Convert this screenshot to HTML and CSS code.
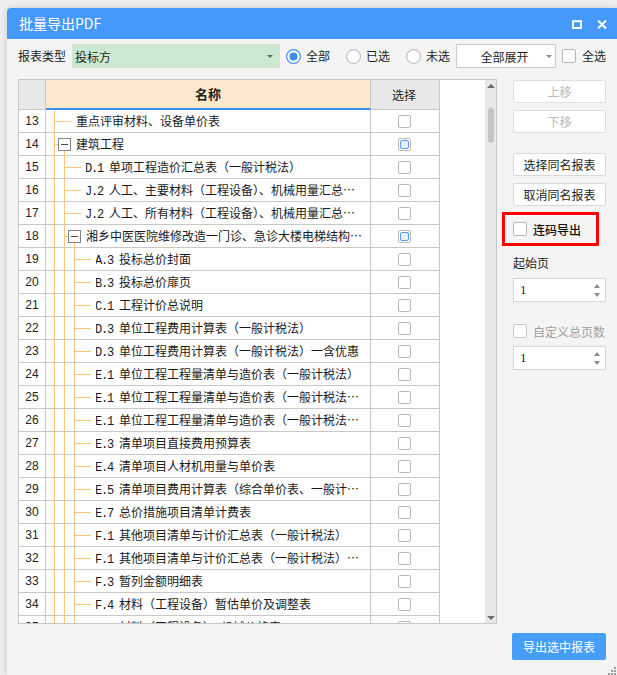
FILE: index.html
```html
<!DOCTYPE html>
<html lang="zh-CN">
<head>
<meta charset="utf-8">
<title>批量导出PDF</title>
<link rel="stylesheet" href="styles.css">
</head>
<body>
<div class="window">
  <div class="titlebar">
    <div class="title">批量导出PDF</div>
    <svg class="tb-icon" width="10" height="9" viewBox="0 0 10 9"><rect x="1" y="1.2" width="8" height="6.8" fill="none" stroke="#fff" stroke-width="2"/></svg>
    <svg class="tb-icon close" width="10" height="9" viewBox="0 0 10 9"><path d="M1 0.5 L9 8.5 M9 0.5 L1 8.5" stroke="#fff" stroke-width="2" fill="none"/></svg>
  </div>

  <div class="toolbar">
    <span class="lbl w48">报表类型</span>
    <div class="combo green"><span class="combo-text">投标方</span><span class="caret"></span></div>
    <svg class="radio" width="15" height="15" viewBox="0 0 15 15"><circle cx="7.5" cy="7.5" r="6.9" fill="#fff" stroke="#3d8ef0" stroke-width="1.2"/><circle cx="7.5" cy="7.5" r="4" fill="#3d8ef0"/></svg>
    <span class="lbl rl">全部</span>
    <svg class="radio gap" width="15" height="15" viewBox="0 0 15 15"><circle cx="7.5" cy="7.5" r="6.9" fill="#fff" stroke="#c2c2c2" stroke-width="1.2"/></svg>
    <span class="lbl rl">已选</span>
    <svg class="radio gap" width="15" height="15" viewBox="0 0 15 15"><circle cx="7.5" cy="7.5" r="6.9" fill="#fff" stroke="#c2c2c2" stroke-width="1.2"/></svg>
    <span class="lbl rl">未选</span>
    <div class="combo white"><span class="combo-text c">全部展开</span><span class="caret"></span></div>
    <span class="check tcheck"></span>
    <span class="lbl rl6">全选</span>
  </div>

  <div class="main">
    <div class="table">
      <div class="grid">
        <div class="hrow">
          <div class="hnum"></div>
          <div class="hname">名称</div>
          <div class="hsel">选择</div>
        </div>

        <div class="row"><div class="num">13</div><div class="name"><span class="br"></span><span class="txt">重点评审材料、设备单价表</span></div><div class="sel"><span class="cb"></span></div></div>
        <div class="row"><div class="num">14</div><div class="name"><span class="br exp"><span class="box"></span></span><span class="txt">建筑工程</span></div><div class="sel"><span class="cb on"><span class="inner"></span></span></div></div>
        <div class="row"><div class="num">15</div><div class="name"><span class="g"></span><span class="br"></span><span class="txt"><span class="code">D.1</span>单项工程造价汇总表（一般计税法）</span></div><div class="sel"><span class="cb"></span></div></div>
        <div class="row"><div class="num">16</div><div class="name"><span class="g"></span><span class="br"></span><span class="txt"><span class="code">J.2</span>人工、主要材料（工程设备）、机械用量汇总表（一般计税法）</span></div><div class="sel"><span class="cb"></span></div></div>
        <div class="row"><div class="num">17</div><div class="name"><span class="g"></span><span class="br"></span><span class="txt"><span class="code">J.2</span>人工、所有材料（工程设备）、机械用量汇总表（一般计税法）</span></div><div class="sel"><span class="cb"></span></div></div>
        <div class="row"><div class="num">18</div><div class="name"><span class="g"></span><span class="br exp"><span class="box"></span></span><span class="txt">湘乡中医医院维修改造一门诊、急诊大楼电梯结构加固工程</span></div><div class="sel"><span class="cb on"><span class="inner"></span></span></div></div>
        <div class="row"><div class="num">19</div><div class="name"><span class="g"></span><span class="g"></span><span class="br"></span><span class="txt"><span class="code">A.3</span>投标总价封面</span></div><div class="sel"><span class="cb"></span></div></div>
        <div class="row"><div class="num">20</div><div class="name"><span class="g"></span><span class="g"></span><span class="br"></span><span class="txt"><span class="code">B.3</span>投标总价扉页</span></div><div class="sel"><span class="cb"></span></div></div>
        <div class="row"><div class="num">21</div><div class="name"><span class="g"></span><span class="g"></span><span class="br"></span><span class="txt"><span class="code">C.1</span>工程计价总说明</span></div><div class="sel"><span class="cb"></span></div></div>
        <div class="row"><div class="num">22</div><div class="name"><span class="g"></span><span class="g"></span><span class="br"></span><span class="txt"><span class="code">D.3</span>单位工程费用计算表（一般计税法）</span></div><div class="sel"><span class="cb"></span></div></div>
        <div class="row"><div class="num">23</div><div class="name"><span class="g"></span><span class="g"></span><span class="br"></span><span class="txt"><span class="code">D.3</span>单位工程费用计算表（一般计税法）一含优惠</span></div><div class="sel"><span class="cb"></span></div></div>
        <div class="row"><div class="num">24</div><div class="name"><span class="g"></span><span class="g"></span><span class="br"></span><span class="txt"><span class="code">E.1</span>单位工程工程量清单与造价表（一般计税法）</span></div><div class="sel"><span class="cb"></span></div></div>
        <div class="row"><div class="num">25</div><div class="name"><span class="g"></span><span class="g"></span><span class="br"></span><span class="txt"><span class="code">E.1</span>单位工程工程量清单与造价表（一般计税法）一含优惠</span></div><div class="sel"><span class="cb"></span></div></div>
        <div class="row"><div class="num">26</div><div class="name"><span class="g"></span><span class="g"></span><span class="br"></span><span class="txt"><span class="code">E.1</span>单位工程工程量清单与造价表（一般计税法）一含优惠二</span></div><div class="sel"><span class="cb"></span></div></div>
        <div class="row"><div class="num">27</div><div class="name"><span class="g"></span><span class="g"></span><span class="br"></span><span class="txt"><span class="code">E.3</span>清单项目直接费用预算表</span></div><div class="sel"><span class="cb"></span></div></div>
        <div class="row"><div class="num">28</div><div class="name"><span class="g"></span><span class="g"></span><span class="br"></span><span class="txt"><span class="code">E.4</span>清单项目人材机用量与单价表</span></div><div class="sel"><span class="cb"></span></div></div>
        <div class="row"><div class="num">29</div><div class="name"><span class="g"></span><span class="g"></span><span class="br"></span><span class="txt"><span class="code">E.5</span>清单项目费用计算表（综合单价表、一般计税法）</span></div><div class="sel"><span class="cb"></span></div></div>
        <div class="row"><div class="num">30</div><div class="name"><span class="g"></span><span class="g"></span><span class="br"></span><span class="txt"><span class="code">E.7</span>总价措施项目清单计费表</span></div><div class="sel"><span class="cb"></span></div></div>
        <div class="row"><div class="num">31</div><div class="name"><span class="g"></span><span class="g"></span><span class="br"></span><span class="txt"><span class="code">F.1</span>其他项目清单与计价汇总表（一般计税法）</span></div><div class="sel"><span class="cb"></span></div></div>
        <div class="row"><div class="num">32</div><div class="name"><span class="g"></span><span class="g"></span><span class="br"></span><span class="txt"><span class="code">F.1</span>其他项目清单与计价汇总表（一般计税法）一含优惠</span></div><div class="sel"><span class="cb"></span></div></div>
        <div class="row"><div class="num">33</div><div class="name"><span class="g"></span><span class="g"></span><span class="br"></span><span class="txt"><span class="code">F.3</span>暂列金额明细表</span></div><div class="sel"><span class="cb"></span></div></div>
        <div class="row"><div class="num">34</div><div class="name"><span class="g"></span><span class="g"></span><span class="br"></span><span class="txt"><span class="code">F.4</span>材料（工程设备）暂估单价及调整表</span></div><div class="sel"><span class="cb"></span></div></div>
        <div class="row"><div class="num">35</div><div class="name"><span class="g"></span><span class="g"></span><span class="br"></span><span class="txt"><span class="code">F.5</span>材料（工程设备）、机械价格表</span></div><div class="sel"><span class="cb"></span></div></div>
      </div>
      <div class="vscroll">
        <span class="arr up"></span>
        <span class="thumb"></span>
        <span class="spacer"></span>
        <span class="arr down"></span>
      </div>
    </div>

    <div class="panel">
      <div class="btn disabled first">上移</div>
      <div class="btn disabled g7">下移</div>
      <div class="btn g20">选择同名报表</div>
      <div class="btn g7">取消同名报表</div>
      <div class="redbox"><span class="check"></span><span class="rb-text">连码导出</span></div>
      <div class="plabel">起始页</div>
      <div class="spin"><span>1</span><span class="spin-arrows"><span class="sa up"></span><span class="sa down"></span></span></div>
      <div class="crow"><span class="check"></span><span class="muted">自定义总页数</span></div>
      <div class="spin s2"><span>1</span><span class="spin-arrows"><span class="sa up"></span><span class="sa down"></span></span></div>
    </div>
  </div>

  <div class="footer">
    <div class="primary">导出选中报表</div>
  </div>

  <svg class="grip" width="9" height="8" viewBox="0 0 9 8"><g fill="#9a9a9a"><rect x="7" y="0" width="2" height="2"/><rect x="4" y="3" width="2" height="2"/><rect x="7" y="3" width="2" height="2"/><rect x="1" y="6" width="2" height="2"/><rect x="4" y="6" width="2" height="2"/><rect x="7" y="6" width="2" height="2"/></g></svg>
</div>
</body>
</html>
```

FILE: styles.css
```css
* { box-sizing: border-box; }
html, body { margin: 0; height: 100%; }
body {
  background: #eeeeee;
  font-family: "Noto Sans CJK SC", "Noto Sans", sans-serif;
  font-size: 12px;
  color: #1e1e1e;
  padding: 8px 0 0 7px;
  overflow: hidden;
}
.window {
  width: 610px;
  height: 667px;
  background: #f4f4f4;
  border-radius: 4px 0 0 0;
  box-shadow: 0 0 6px rgba(0,0,0,0.16);
  display: flex;
  flex-direction: column;
  position: relative;
  overflow: hidden;
}
.titlebar {
  height: 31px;
  flex-shrink: 0;
  background: #4499fb;
  color: #fff;
  display: flex;
  align-items: center;
  padding: 0 10px 0 12px;
}
.title { flex: 1; font-size: 14px; line-height: 31px; padding-bottom: 1px; }
.tb-icon { display: block; margin-top: 1px; }
.tb-icon.close { margin-left: 15px; }

/* toolbar */
.toolbar {
  display: flex;
  align-items: center;
  height: 24px;
  margin: 5px 11px 0 11px;
  flex-shrink: 0;
}
.lbl { line-height: 16px; white-space: nowrap; color: #1e1e1e; }
.w48 { width: 48px; }
.rl { margin-left: 5px; width: 24px; }
.rl6 { margin-left: 6px; }
.combo {
  height: 24px;
  display: flex;
  align-items: center;
  position: relative;
  border: 1px solid #d6d6d6;
  margin-left: 6px;
}
.combo.green { width: 208px; background: #cde8d0; border-color: #d5e2d6; }
.combo.white { width: 100px; background: #fff; border-color: #cbcbcb; }
.combo-text { padding-left: 2px; flex: 1; font-size: 12px; }
.combo-text.c { text-align: center; padding-left: 6px; }
.caret {
  width: 0; height: 0;
  border-left: 3px solid transparent;
  border-right: 3px solid transparent;
  border-top: 3px solid #6b6b6b;
  margin-right: 6px;
  margin-top: 1px;
}
.combo.white .caret { margin-right: 3px; border-top-color: #8a8a8a; }
.radio { display: block; margin-left: 6px; flex-shrink: 0; }
.radio.gap { margin-left: 16px; }
.check {
  display: inline-block;
  width: 14px; height: 14px;
  border: 1px solid #b7b7b7;
  border-radius: 2px;
  background: #fff;
  flex-shrink: 0;
}
.tcheck { margin-left: 6px; }

/* main */
.main {
  display: flex;
  margin: 11px 11px 0 11px;
  flex-shrink: 0;
}
.table {
  width: 479px;
  height: 545px;
  border: 1px solid #c8c8c8;
  background: #fff;
  display: flex;
}
.grid { flex: 1; overflow: hidden; }
.hrow { display: flex; height: 30px; }
.hnum {
  width: 27px;
  background: #e8e8e8;
  border-right: 1px solid #c8c8c8;
  border-bottom: 1px solid #c8c8c8;
}
.hname {
  width: 325px;
  background: #fde8cc;
  border-right: 1px solid #c8c8c8;
  border-bottom: 2px solid #3d8ef0;
  font-weight: bold;
  font-size: 13px;
  text-align: center;
  line-height: 28px;
  color: #222;
}
.hsel {
  width: 69px;
  background: #e8e8e8;
  border-right: 1px solid #c8c8c8;
  border-bottom: 1px solid #c8c8c8;
  text-align: center;
  line-height: 29px;
  padding-right: 2px;
}
.row { display: flex; height: 23px; width: 421px; border-bottom: 1px solid #c8c8c8; }
.num {
  width: 27px;
  border-right: 1px solid #c8c8c8;
  text-align: center;
  line-height: 22px;
  font-family: "Liberation Sans", "Noto Sans", sans-serif;
  font-size: 12px;
  color: #222;
}
.name {
  width: 325px;
  border-right: 1px solid #c8c8c8;
  display: flex;
  align-items: stretch;
  padding-left: 8px;
  padding-right: 6px;
  min-width: 0;
}
.g {
  width: 10px;
  flex-shrink: 0;
  background: linear-gradient(#fcc67a, #fcc67a) no-repeat 0 0 / 1px 100%;
}
.br {
  width: 17px;
  flex-shrink: 0;
  background:
    linear-gradient(#fcc67a, #fcc67a) no-repeat 0 0 / 1px 100%,
    linear-gradient(#fcc67a, #fcc67a) no-repeat 0 11px / 17px 1px;
}
.br.exp {
  background:
    linear-gradient(#fcc67a, #fcc67a) no-repeat 0 0 / 1px 100%,
    linear-gradient(#fcc67a, #fcc67a) no-repeat 0 11px / 4px 1px;
  display: flex;
  align-items: center;
  padding-left: 4px;
}
.box {
  width: 13px; height: 13px;
  border: 1px solid #858585;
  background: #fff;
  position: relative;
  margin-top: 1px;
}
.box::before {
  content: "";
  position: absolute;
  left: 2px; top: 5px;
  width: 7px; height: 1px;
  background: #4a4a4a;
}
.box::after {
  content: "";
  position: absolute;
  left: 5px; top: 12px;
  width: 1px; height: 6px;
  background: #fcc67a;
}
.txt {
  flex: 1;
  min-width: 0;
  margin-left: 5px;
  line-height: 22px;
  white-space: nowrap;
  overflow: hidden;
  text-overflow: ellipsis;
  color: #1a1a1a;
}
.code {
  display: inline-block;
  width: 24px;
  font-family: "Liberation Mono", "DejaVu Sans Mono", monospace;
  font-size: 12px;
  letter-spacing: -1.2px;
  margin-left: -1px;
}
.sel {
  width: 69px;
  border-right: 1px solid #c8c8c8;
  display: flex;
  align-items: center;
  justify-content: center;
  padding-right: 2px;
}
.cb {
  width: 13px; height: 13px;
  border: 1px solid #b9b9b9;
  border-radius: 2px;
  background: #fff;
  display: flex;
  align-items: center;
  justify-content: center;
}
.cb .inner {
  width: 9px; height: 9px;
  border: 1.5px solid #4f9df5;
  border-radius: 2px;
  background: #e9eef6;
}
.vscroll {
  width: 11px;
  background: #e8e8e8;
  display: flex;
  flex-direction: column;
  align-items: center;
}
.arr {
  width: 0; height: 0;
  border-left: 4px solid transparent;
  border-right: 4px solid transparent;
}
.arr.up { border-bottom: 4px solid #6a6a6a; margin-top: 4px; }
.arr.down { border-top: 4px solid #6a6a6a; margin-bottom: 3px; }
.thumb {
  width: 6px;
  height: 35px;
  border-radius: 3px;
  background: #c5c5c5;
  margin-top: 20px;
}
.spacer { flex: 1; }

/* right panel */
.panel {
  width: 93px;
  margin-left: 16px;
  display: flex;
  flex-direction: column;
}
.btn {
  height: 23px;
  border: 1px solid #d9d9d9;
  border-radius: 2px;
  background: #fff;
  display: flex;
  align-items: center;
  justify-content: center;
  color: #1e1e1e;
}
.btn.first { margin-top: 1px; }
.btn.disabled { color: #b9b9b9; border-color: #e0e0e0; }
.g7 { margin-top: 7px; }
.g20 { margin-top: 20px; }
.redbox {
  margin-top: 6px;
  margin-left: -11px;
  width: 97px;
  height: 34px;
  border: 3px solid #ff0000;
  display: flex;
  align-items: center;
  padding-left: 8px;
}
.rb-text { margin-left: 6px; font-weight: 500; color: #111; }
.plabel { margin-top: 10px; line-height: 14px; height: 14px; }
.spin {
  margin-top: 8px;
  height: 24px;
  border: 1px solid #d6d6d6;
  background: #fff;
  display: flex;
  align-items: center;
  justify-content: space-between;
  padding-left: 6px;
  padding-right: 5px;
  font-family: "Liberation Serif", serif;
  font-size: 13px;
}
.spin-arrows { display: flex; flex-direction: column; gap: 5px; }
.sa { width: 0; height: 0; border-left: 3px solid transparent; border-right: 3px solid transparent; }
.sa.up { border-bottom: 4px solid #8c8c8c; }
.sa.down { border-top: 4px solid #8c8c8c; }
.crow { margin-top: 22px; display: flex; align-items: center; height: 14px; }
.crow .check { border-color: #c6c6c6; }
.muted { margin-left: 6px; color: #a0a0a0; white-space: nowrap; }

.footer {
  display: flex;
  justify-content: flex-end;
  margin: 9px 11px 0 0;
}
.primary {
  width: 94px;
  height: 27px;
  background: #479dfa;
  color: #fff;
  border-radius: 2px;
  display: flex;
  align-items: center;
  justify-content: center;
}
.grip { position: absolute; right: 1px; bottom: 0; }
```
